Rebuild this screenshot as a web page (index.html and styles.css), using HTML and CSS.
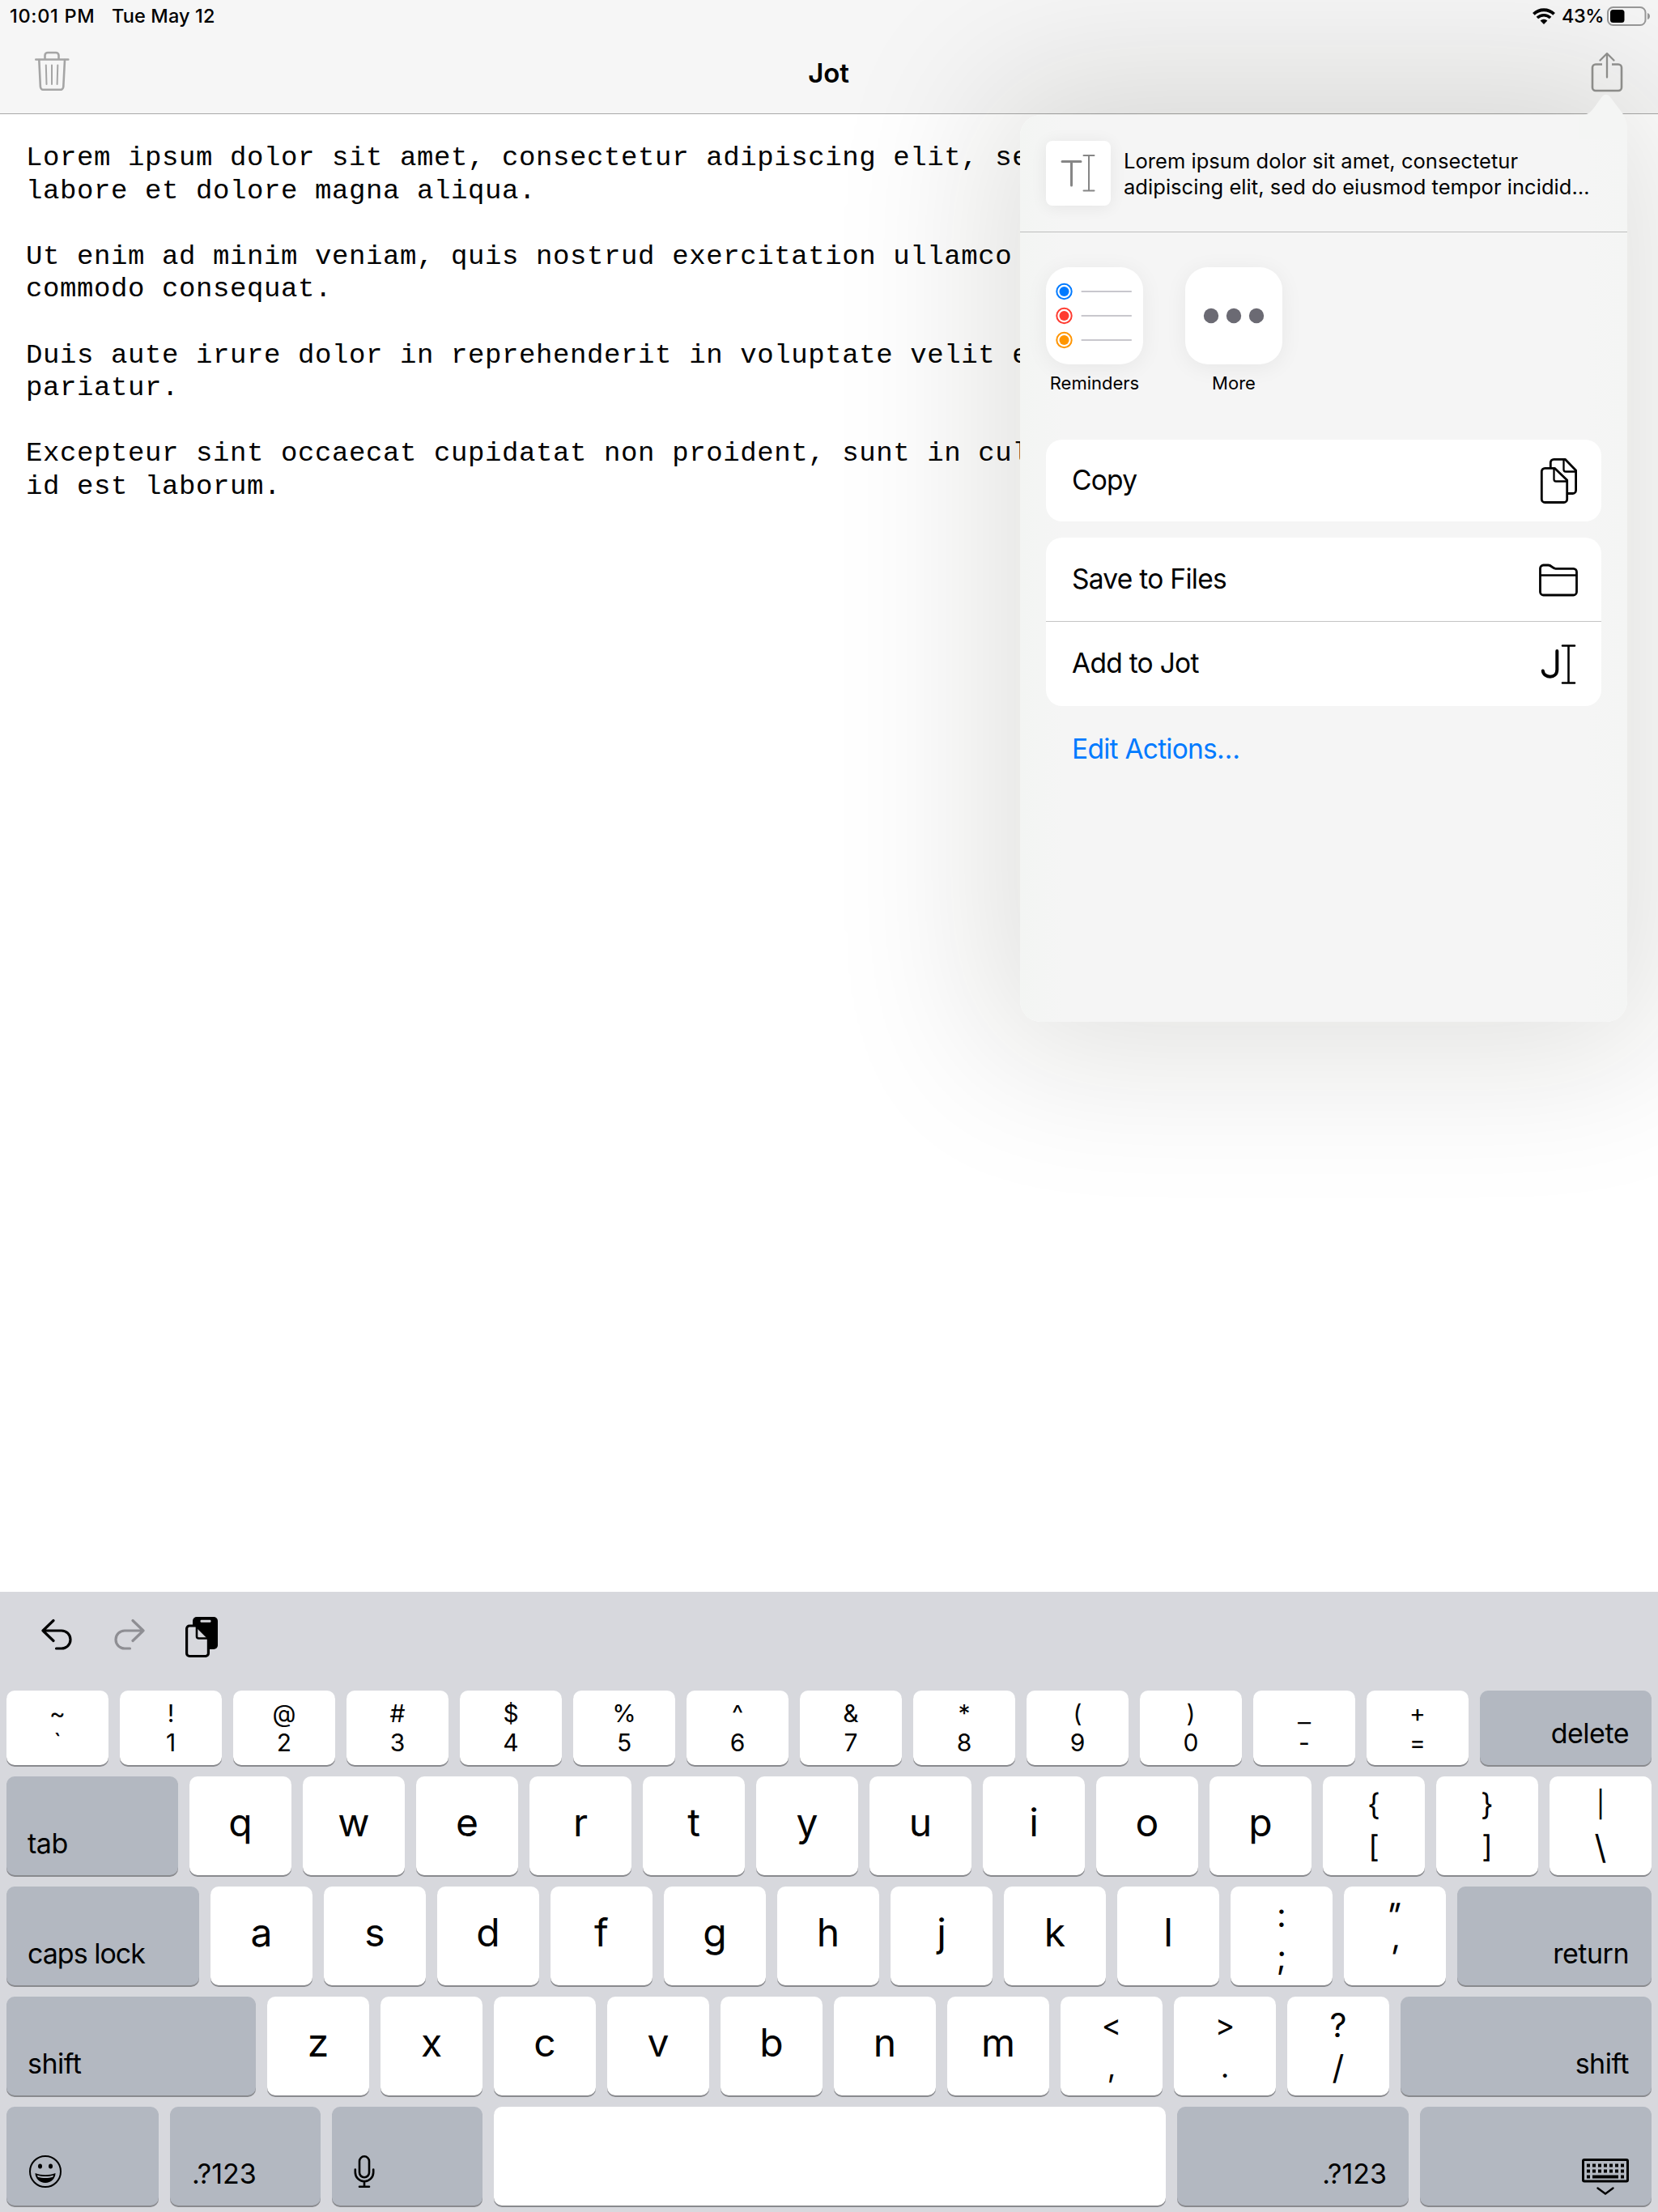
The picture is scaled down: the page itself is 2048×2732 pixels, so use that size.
FILE: index.html
```html
<!DOCTYPE html>
<html lang="en">
<head>
<meta charset="utf-8">
<title>Jot</title>
<link rel="stylesheet" href="styles.css">
</head>
<body>
<header class="top">
  <div class="status">
    <span class="status-time">10:01 PM</span>
    <span class="status-date">Tue May 12</span>
    <svg class="wifi" width="30" height="22" viewBox="0 0 30 22">
      <path d="M2.4 8.4a18 18 0 0 1 25.2 0" fill="none" stroke="#000" stroke-width="3.8"/>
      <path d="M6.9 13a11.6 11.6 0 0 1 16.2 0" fill="none" stroke="#000" stroke-width="3.6"/>
      <path d="M15 21l-4.4-4.4a6.4 6.4 0 0 1 8.8 0z"/>
    </svg>
    <span class="status-charge">43%</span>
    <svg class="battery" width="54" height="26" viewBox="0 0 54 26">
      <rect x="1" y="2" width="46.500" height="22" rx="6.500" fill="none" stroke="#989898" stroke-width="2"/>
      <rect x="4" y="5" width="17.500" height="16" rx="3.500"/>
      <path d="M50 9c4 1.200 4 7 0 8z" fill="#989898"/>
    </svg>
  </div>
  <nav class="nav">
    <svg class="nav-trash" width="44" height="50" viewBox="0 0 44 50" fill="none" stroke="#a5a5a5" stroke-width="2.600" stroke-linecap="round" stroke-linejoin="round">
      <path d="M2.300 11.500h40M13.500 11V6.500a3.500 3.500 0 0 1 3.500-3.500h10a3.500 3.500 0 0 1 3.500 3.500V11"/>
      <path d="M6.300 12l1.600 33a4 4 0 0 0 4 3.800h20.400a4 4 0 0 0 4-3.800l1.700-33"/>
      <path d="M14.800 18.500l.7 23.500M22 18.500V42M29.300 18.500L28.600 42" stroke-width="2"/>
    </svg>
    <h1 class="nav-title">Jot</h1>
    <svg width="40" height="50" viewBox="0 0 40 50" fill="none" stroke="#939391" stroke-width="2.600" stroke-linecap="round" stroke-linejoin="round">
      <path d="M14 15.500H6a4 4 0 0 0-4 4V44a4 4 0 0 0 4 4h28a4 4 0 0 0 4-4V19.500a4 4 0 0 0-4-4h-8" stroke-linecap="butt"/>
      <path d="M20 31.500V2.500M11.500 10.500L20 2l8.500 8.500" stroke-width="2.300"/>
    </svg>
  </nav>
</header>

<main class="note">
  <p>Lorem ipsum dolor sit amet, consectetur adipiscing elit, sed<br>labore et dolore magna aliqua.</p>
  <p>Ut enim ad minim veniam, quis nostrud exercitation ullamco<br>commodo consequat.</p>
  <p>Duis aute irure dolor in reprehenderit in voluptate velit esse<br>pariatur.</p>
  <p>Excepteur sint occaecat cupidatat non proident, sunt in culpa<br>id est laborum.</p>
</main>

<section class="keyboard">
  <div class="tools">
    <svg width="40" height="40" viewBox="0 0 40 40" fill="none" stroke="#000" stroke-width="3.200" stroke-linecap="round" stroke-linejoin="round">
      <path d="M16 2.500L3 15l13 12.500M3 15h23a11 11 0 0 1 0 22h-6.500"/>
    </svg>
    <svg width="40" height="40" viewBox="0 0 40 40" fill="none" stroke="#8e8e93" stroke-width="3.200" stroke-linecap="round" stroke-linejoin="round">
      <path d="M24 2.500L37 15 24 27.500M37 15H14a11 11 0 0 0 0 22h6.500"/>
    </svg>
    <svg class="tool-paste" width="42" height="52" viewBox="0 0 42 52">
      <rect x="10" y="1" width="31" height="40" rx="5"/>
      <rect x="19.500" y="4.800" width="13" height="3" rx="1.200" fill="#d7d8dd"/>
      <path d="M2.600 15.500a3.500 3.500 0 0 1 3.500-3.500H14.500L29.400 27V46a3.500 3.500 0 0 1-3.500 3.500H6.100A3.500 3.500 0 0 1 2.600 46z" fill="#d7d8dd" stroke="#000" stroke-width="3.200"/>
      <path d="M15 11.500V25a2.500 2.500 0 0 0 2.500 2.500H30" fill="none" stroke="#000" stroke-width="2.600"/>
    </svg>
  </div>

  <div class="row row-num">
    <div class="key num"><span>~</span><span>`</span></div>
    <div class="key num"><span>!</span><span>1</span></div>
    <div class="key num"><span>@</span><span>2</span></div>
    <div class="key num"><span>#</span><span>3</span></div>
    <div class="key num"><span>$</span><span>4</span></div>
    <div class="key num"><span>%</span><span>5</span></div>
    <div class="key num"><span>^</span><span>6</span></div>
    <div class="key num"><span>&amp;</span><span>7</span></div>
    <div class="key num"><span>*</span><span>8</span></div>
    <div class="key num"><span>(</span><span>9</span></div>
    <div class="key num"><span>)</span><span>0</span></div>
    <div class="key num"><span class="under">_</span><span>-</span></div>
    <div class="key num"><span>+</span><span>=</span></div>
    <div class="key mod mod-right grow">delete</div>
  </div>

  <div class="row">
    <div class="key mod grow">tab</div>
    <div class="key">q</div><div class="key">w</div><div class="key">e</div><div class="key">r</div><div class="key">t</div>
    <div class="key">y</div><div class="key">u</div><div class="key">i</div><div class="key">o</div><div class="key">p</div>
    <div class="key dual"><span>{</span><span>[</span></div>
    <div class="key dual"><span>}</span><span>]</span></div>
    <div class="key dual"><span class="bar">|</span><span class="tall">\</span></div>
  </div>

  <div class="row">
    <div class="key mod w-caps">caps lock</div>
    <div class="key">a</div><div class="key">s</div><div class="key">d</div><div class="key">f</div><div class="key">g</div>
    <div class="key">h</div><div class="key">j</div><div class="key">k</div><div class="key">l</div>
    <div class="key dual"><span class="tall">:</span><span class="tall">;</span></div>
    <div class="key dual quotes"><span class="tall slant">"</span><span class="tall slant">'</span></div>
    <div class="key mod mod-right grow">return</div>
  </div>

  <div class="row">
    <div class="key mod w-shift">shift</div>
    <div class="key">z</div><div class="key">x</div><div class="key">c</div><div class="key">v</div><div class="key">b</div>
    <div class="key">n</div><div class="key">m</div>
    <div class="key dual"><span>&lt;</span><span>,</span></div>
    <div class="key dual"><span>&gt;</span><span>.</span></div>
    <div class="key dual"><span class="tall">?</span><span class="tall">/</span></div>
    <div class="key mod mod-right grow">shift</div>
  </div>

  <div class="row">
    <div class="key mod w-emoji">
      <svg width="42" height="42" viewBox="0 0 42 42">
        <circle cx="21" cy="21" r="19" fill="none" stroke="#000" stroke-width="2"/>
        <ellipse cx="14.500" cy="14.500" rx="2.500" ry="3"/><ellipse cx="27.500" cy="14.500" rx="2.500" ry="3"/>
        <path d="M8.500 23c7.500 3 17.500 3 25 0 0 6.500-5.500 12-12.500 12S8.500 29.500 8.500 23z"/>
        <path d="M11 25.500c6 2 14 2 20 0l-.7 2.300c-5.600 1.700-13 1.700-18.600 0z" fill="#b3b8c1"/>
      </svg>
    </div>
    <div class="key mod w-sym">.?123</div>
    <div class="key mod w-sym w-mic">
      <svg width="26" height="42" viewBox="0 0 26 42" fill="none" stroke="#000" stroke-width="2.600" stroke-linecap="round">
        <rect x="7" y="2.300" width="12" height="26" rx="6"/>
        <path d="M1.800 18.500v3.500a11.200 11.200 0 0 0 22.400 0v-3.500M13 33v6M7 39.700h12"/>
      </svg>
    </div>
    <div class="key grow"></div>
    <div class="key mod mod-right w-wide">.?123</div>
    <div class="key mod mod-right w-wide w-hide">
      <svg width="60" height="48" viewBox="0 0 60 48">
        <rect x="2.500" y="2.500" width="55" height="26.500" rx="1.500" fill="none" stroke="#000" stroke-width="3"/>
        <path d="M7 9.500h46M7 16.500h46" fill="none" stroke="#000" stroke-width="4" stroke-dasharray="4 3"/>
        <path d="M7 23.500h4M14 23.500h32M49 23.500h4" fill="none" stroke="#000" stroke-width="4"/>
        <path d="M20.500 37.500L30 44.500l9.500-7" fill="none" stroke="#000" stroke-width="2.400" stroke-linecap="round"/>
      </svg>
    </div>
  </div>
</section>

<aside class="sheet">
  <svg class="sheet-arrow" width="64" height="56" viewBox="0 0 64 56">
    <path d="M0 26.500C12 26.500 15 22 19 17L28 4.500C31.500 -.5 36 -.5 39.500 4.500L52 21C57 28 60 32 60 44V56H0z"/>
  </svg>
  <div class="sheet-head">
    <div class="thumb">
      <svg width="44" height="50" viewBox="0 0 44 50" fill="none" stroke="#868686" stroke-linecap="round">
        <path d="M2 10.500h23M13.500 11v29" stroke-width="3"/>
        <path d="M28.500 3h13M28.500 46.500h13M35 3v43.500" stroke-width="2"/>
      </svg>
    </div>
    <p class="sheet-text">Lorem ipsum dolor sit amet, consectetur<br>adipiscing elit, sed do eiusmod tempor incidid…</p>
  </div>
  <div class="apps">
    <div class="app">
      <div class="app-icon">
        <svg width="120" height="120" viewBox="0 0 120 120" fill="none">
          <g stroke="#c8c7cd" stroke-width="2.200" stroke-linecap="round"><path d="M44.500 30H105M44.500 60H105M44.500 90H105"/></g>
          <g stroke-width="2"><circle cx="22.500" cy="30" r="9.200" stroke="#007aff"/><circle cx="22.500" cy="60" r="9.200" stroke="#ff3b30"/><circle cx="22.500" cy="90" r="9.200" stroke="#ff9500"/></g>
          <circle cx="22.500" cy="30" r="6" fill="#007aff"/><circle cx="22.500" cy="60" r="6" fill="#ff3b30"/><circle cx="22.500" cy="90" r="6" fill="#ff9500"/>
        </svg>
      </div>
      <span class="app-name">Reminders</span>
    </div>
    <div class="app">
      <div class="app-icon">
        <svg width="120" height="120" viewBox="0 0 120 120" fill="#6b6a73">
          <circle cx="32" cy="60" r="9.200"/><circle cx="60" cy="60" r="9.200"/><circle cx="88" cy="60" r="9.200"/>
        </svg>
      </div>
      <span class="app-name">More</span>
    </div>
  </div>
  <div class="group">
    <div class="action action-copy">Copy
      <svg width="52" height="60" viewBox="0 0 52 60" fill="#fff" stroke="#000" stroke-width="2.800" stroke-linejoin="round">
        <path d="M16.300 8.300a4 4 0 0 1 4-4h14L47.600 18v24.500a4 4 0 0 1-4 4H20.300a4 4 0 0 1-4-4z"/>
        <path d="M32.500 5v12a2.500 2.500 0 0 0 2.500 2.500h12" fill="none" stroke-width="2.300"/>
        <path d="M5.300 19.300a4 4 0 0 1 4-4h12L36.700 30v23.500a4 4 0 0 1-4 4H9.300a4 4 0 0 1-4-4z"/>
        <path d="M20.500 16v13a2.500 2.500 0 0 0 2.500 2.500h13" fill="none" stroke-width="2.300"/>
      </svg>
    </div>
  </div>
  <div class="group">
    <div class="action action-save">Save to Files
      <svg width="52" height="60" viewBox="0 0 52 60" fill="none" stroke="#000" stroke-width="2.800" stroke-linejoin="round">
        <path d="M3.500 17a4 4 0 0 1 4-4h6c4 0 5 4.300 9 4.300h22a4 4 0 0 1 4 4V46a4 4 0 0 1-4 4h-37a4 4 0 0 1-4-4z"/>
        <path d="M3.500 25.500h45" stroke-width="2.300"/>
      </svg>
    </div>
    <div class="action">Add to Jot
      <svg width="52" height="60" viewBox="0 0 52 60" fill="none" stroke="#000" stroke-linecap="round">
        <path d="M24.300 15v23c0 12-16.500 11-17.500 1.500" stroke-width="4"/>
        <path d="M31 8.500h15M31 54.500h15M38.500 8.500v46" stroke-width="2.600"/>
      </svg>
    </div>
  </div>
  <a class="edit">Edit Actions…</a>
</aside>
</body>
</html>
```
FILE: styles.css
```css
* { box-sizing: border-box; }

body {
  margin: 0;
  width: 2048px;
  height: 2732px;
  display: flex;
  flex-direction: column;
  position: relative;
  overflow: hidden;
  background: #fff;
  color: #000;
  font-family: Inter, "Liberation Sans", sans-serif;
}

svg { display: block; flex: none; }
p, h1 { margin: 0; }

/* Status bar and navigation bar */
.top {
  height: 141px;
  flex: none;
  background: #f6f6f6;
  border-bottom: 1px solid #a9a9a9;
}

.status {
  display: flex;
  align-items: center;
  height: 40px;
  padding: 0 9px 1px 12px;
  font-size: 23.5px;
  font-weight: 500;
}
.status-time { letter-spacing: 0.7px; }
.status-date { margin-left: 20.5px; letter-spacing: 0.15px; }
.wifi { margin-left: auto; }
.status-charge { margin: 0 4px 0 7px; letter-spacing: -0.5px; }

.nav {
  display: flex;
  align-items: center;
  justify-content: space-between;
  height: 100px;
  padding: 0 43px 2px 42px;
}
.nav-trash { margin-bottom: 4px; }
.nav-title {
  margin: 2px 4px 0 0;
  font-size: 33px;
  font-weight: 600;
  line-height: 40px;
  letter-spacing: -0.2px;
}

/* Note text */
.note {
  flex: 1;
  padding: 34px 0 0 32px;
  font-family: "Liberation Mono", monospace;
  font-size: 34px;
  line-height: 40.6px;
  letter-spacing: 0.6px;
  white-space: nowrap;
}
.note p + p { margin-top: 40.6px; }

/* Keyboard */
.keyboard {
  flex: none;
  display: flex;
  flex-direction: column;
  gap: 14px;
  height: 766px;
  padding: 0 8px 8px;
  background: #d7d8dd;
}
.tools {
  display: flex;
  gap: 50px;
  height: 108px;
  padding: 33px 0 0 41.5px;
}
.tool-paste { margin: -3px 0 0 -1.5px; }

.row { display: flex; gap: 14px; height: 122px; }
.row-num { height: 92px; }

.key {
  flex: none;
  width: 126px;
  display: flex;
  align-items: center;
  justify-content: center;
  padding-bottom: 9px;
  background: #fff;
  border-radius: 10px;
  box-shadow: 0 2px 0 #898a8e;
  font-size: 48px;
}
.num, .dual { flex-direction: column; padding: 0; }
.num { font-size: 30px; line-height: 36.5px; }
.dual { font-size: 37px; line-height: 52.5px; }
.under { font-size: 36px; font-weight: 300; margin-top: -2px; padding-bottom: 2px; }
.tall { font-size: 41px; }
.bar { font-size: 32px; }
.quotes { padding-right: 4px; }
.slant { transform: skewX(-14deg); }

.mod {
  align-items: flex-end;
  justify-content: flex-start;
  padding: 0 26px 19px;
  background: #b3b8c1;
  font-size: 34px;
  line-height: 40px;
  letter-spacing: -0.5px;
}
.mod-right { justify-content: flex-end; padding-right: 28px; }
.grow { flex: 1; }
.w-caps { width: 238px; letter-spacing: -1px; }
.w-shift { width: 308px; }
.w-emoji { width: 188px; padding-left: 27px; padding-bottom: 21px; }
.w-sym { width: 186px; padding-left: 27px; letter-spacing: 0; }
.w-mic { padding-bottom: 21px; }
.w-wide { width: 286px; padding-right: 27px; letter-spacing: 0; }
.w-hide { padding-bottom: 11px; }

/* Share sheet */
.sheet {
  position: absolute;
  left: 1260px;
  top: 142px;
  width: 750px;
  height: 1120px;
  display: flex;
  flex-direction: column;
  border-radius: 26px;
  background: linear-gradient(90deg, #f3f5f3, #f5f5f5 7%, #f5f5f5 93%, #f4f5f4);
  box-shadow: 0 0 190px 45px rgba(20, 20, 0, 0.125);
}
.sheet-arrow {
  position: absolute;
  right: -4px;
  top: -26px;
  fill: #f4f5f4;
}
.sheet-head {
  display: flex;
  gap: 16px;
  height: 145px;
  padding: 32px 32px 0;
  border-bottom: 1px solid #bdbdbd;
}
.thumb {
  flex: none;
  display: flex;
  align-items: center;
  justify-content: center;
  width: 80px;
  height: 80px;
  border-radius: 8px;
  background: #fff;
  box-shadow: 0 2px 20px rgba(0, 0, 0, 0.07);
}
.sheet-text {
  padding-top: 9px;
  font-size: 25.5px;
  line-height: 31.5px;
  letter-spacing: 0.04px;
  white-space: nowrap;
}

.apps {
  display: flex;
  gap: 52px;
  height: 256px;
  padding: 43px 32px 0;
}
.app {
  display: flex;
  flex-direction: column;
  align-items: center;
  width: 120px;
}
.app-icon {
  width: 120px;
  height: 120px;
  border-radius: 28px;
  background: #fff;
  box-shadow: 0 4px 28px rgba(0, 0, 0, 0.06);
}
.app-name { margin-top: 9px; font-size: 22px; line-height: 28px; }

.group {
  margin: 0 32px 20px;
  border-radius: 20px;
  background: #fff;
}
.action {
  display: flex;
  align-items: center;
  justify-content: space-between;
  height: 105px;
  padding: 0 27px 2px 32px;
  font-size: 33.5px;
  letter-spacing: -0.72px;
}
.action-copy { height: 101px; }
.action-save { height: 103px; }
.action + .action { border-top: 1px solid #c4c4c4; }
.edit {
  padding: 12px 64px 0;
  color: #007aff;
  font-size: 33.5px;
  line-height: 42px;
  letter-spacing: -0.75px;
}
```
